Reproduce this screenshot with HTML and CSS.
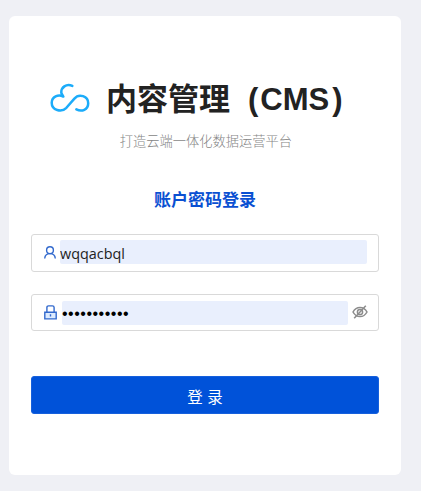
FILE: index.html
```html
<!DOCTYPE html>
<html lang="zh-CN">
<head>
    <meta charset="UTF-8">
    <meta name="viewport" content="width=device-width, initial-scale=1.0">
    <link rel="stylesheet" href="styles.css">
    <title>内容管理（CMS）</title>
</head>
<body>
    <div id="card">
        <div class="header">
            <svg class="logo" width="40" height="30" viewBox="0 0 40 30">
                <path d="M22.3 2.9C16.5 .1 10.6 4.5 11.4 10.2L13.3 13.6C8.4 10.8 1.7 13.6 1.7 19.8C1.7 27.4 11.5 29.8 16.4 24.8L24.4 15.6C29.1 10 38.2 13.2 38.2 20.2C38.2 26.7 31.7 29.2 26.4 26.3"/>
            </svg>
            <h1>内容管理<span class="left">(</span>CMS<span class="right">)</span></h1>
        </div>
        <p class="desc">打造云端一体化数据运营平台</p>
        <h2>账户密码登录</h2>

        <form>
            <div class="field">
                <svg class="icon user" width="12" height="13" viewBox="0 0 12 13">
                    <circle cx="6" cy="4.2" r="3.4"/>
                    <path d="M.7 12.5C.9 9.4 3 7.6 6 7.6S11.1 9.4 11.3 12.5"/>
                </svg>
                <input type="text" class="name" value="wqqacbql" spellcheck="false">
            </div>
            <div class="field password">
                <svg class="icon lock" width="13" height="15" viewBox="0 0 13 15">
                    <path class="base" d="M.8 7.2H12.2V13.9H.8Z"/>
                    <path d="M2.9 7V2.6Q2.9 .9 4.6 .9H8.4Q10.1 .9 10.1 2.6V7M6.5 9.3V11.6"/>
                </svg>
                <input type="password" class="pwd" value="abcdefghijk">
                <svg class="eye" width="16" height="16" viewBox="0 0 16 16">
                    <path d="M1 8C4.3 1.9 11.7 1.9 15 8C11.7 14.1 4.3 14.1 1 8Z"/>
                    <circle cx="8" cy="8" r="2.6"/>
                    <path d="M2.2 14.2L13.8 1.8"/>
                </svg>
            </div>
            <button type="button">登 录</button>
        </form>
    </div>
</body>
</html>
```

FILE: styles.css
```css
*{
    box-sizing: border-box;
}

body{
    margin: 0;
    padding: 16px 20px 16px 9px;
    height: 491px;
    overflow: hidden;
    background-color: #eff0f5;
    font-family: "Liberation Sans", "Noto Sans CJK SC", sans-serif;
}

#card{
    width: 392px;
    height: 459px;
    padding: 60px 22px 0;
    background-color: white;
    border-radius: 6px;
}

.header{
    display: flex;
    align-items: center;
    height: 46px;
    padding-left: 19px;
}

.logo{
    flex: none;
    margin: 0 16px 2px 0;
    fill: none;
    stroke: #1cacfa;
    stroke-width: 2.5;
    stroke-linecap: round;
    stroke-linejoin: round;
}

h1{
    margin: 2px 0 0;
    font-size: 31px;
    line-height: 46px;
    font-weight: bold;
    color: #222;
    white-space: nowrap;
}

.left{
    margin: 0 2px 0 18px;
}

.right{
    margin-left: 3px;
}

.desc{
    margin: 10px 0 0;
    font-size: 13.25px;
    line-height: 20px;
    font-weight: 300;
    color: #858585;
    text-align: center;
    padding-left: 2px;
}

h2{
    margin: 36px 0 0;
    font-size: 17px;
    line-height: 26px;
    font-weight: bold;
    color: #0a50d2;
    text-align: center;
}

form{
    margin-top: 20px;
}

.field{
    display: flex;
    align-items: center;
    height: 38px;
    width: 348px;
    margin-bottom: 22px;
    padding: 0 11px;
    border: 1px solid #d9d9d9;
    border-radius: 3px;
}

.password{
    height: 37px;
}

.icon{
    flex: none;
    fill: none;
    stroke: #3269cd;
    stroke-width: 1.4;
}

.base{
    fill: #dcebff;
}

.user{
    margin: 0 0 1px 1px;
}

.lock{
    margin: 0 0 1px 1px;
}

input{
    flex: 1;
    min-width: 0;
    height: 24px;
    padding: 0;
    border: none;
    border-radius: 2px;
    outline: none;
    background-color: #e9effd;
    color: #222;
}

.name{
    margin: 0 0 2px 4px;
    padding-top: 3px;
    font-family: "Open Sans", sans-serif;
    font-size: 14.4px;
}

.pwd{
    margin: 0 4px 0 5px;
    padding-top: 2px;
    font-family: "Liberation Sans", sans-serif;
    font-size: 16px;
    letter-spacing: 0.5px;
    color: black;
}

.eye{
    flex: none;
    margin: 0 -1px 2px 0;
    fill: none;
    stroke: #8c8c8c;
    stroke-width: 1.5;
}

button{
    display: block;
    width: 348px;
    height: 38px;
    margin-top: 45px;
    padding: 1px 0 0;
    border: 1px solid #1660dc;
    border-radius: 3px;
    background-color: #0052d9;
    color: white;
    font-family: "Liberation Sans", "Noto Sans CJK SC", sans-serif;
    font-size: 15.5px;
}
```
